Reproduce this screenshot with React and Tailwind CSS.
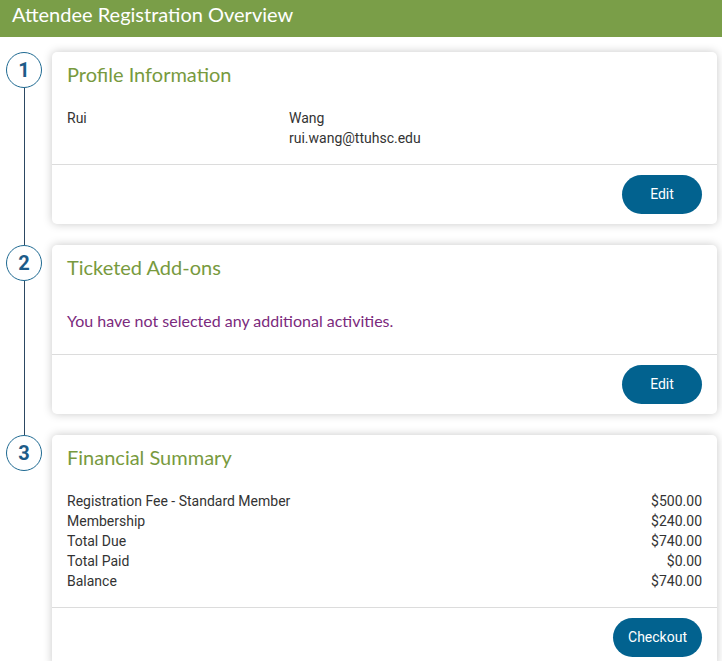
import React from 'react';

const LATO = "font-['Lato','Liberation_Sans',sans-serif]";
const ROBOTO = "font-['Roboto','Liberation_Sans',sans-serif]";

const FEES = [
  ['Registration Fee - Standard Member', '$500.00'],
  ['Membership', '$240.00'],
  ['Total Due', '$740.00'],
  ['Total Paid', '$0.00'],
  ['Balance', '$740.00'],
];

function Step({ n, last, children }) {
  return (
    <div className="flex">
      <div className="w-[48px] flex flex-col items-center shrink-0">
        <div className={`h-[36px] w-[36px] rounded-full border-[1.5px] border-[#1f6a92] bg-white flex items-center justify-center text-[20px] font-bold text-[#1d5b88] ${ROBOTO}`}>
          {n}
        </div>
        {!last && <div className="flex-1 w-px bg-[#2c4862]" />}
      </div>
      <div className={`flex-1 ml-[4px] mr-[5px] bg-white rounded-[5px] shadow-[0_0_10px_rgba(0,0,0,0.22)] ${last ? '' : 'mb-[21px]'}`}>
        {children}
      </div>
    </div>
  );
}

function Title({ children }) {
  return (
    <h2 className={`px-[15px] pt-[10px] text-[20px] leading-[24px] text-[#789a3e] ${LATO}`}>
      {children}
    </h2>
  );
}

function Footer({ label }) {
  return (
    <div className="border-t border-[#dcdcdc] flex justify-end px-[15px] pt-[10px] pb-[10px]">
      <button className={`h-[39px] min-w-[80px] px-[15px] rounded-full bg-[#02628f] text-white text-[14px] ${ROBOTO}`}>
        {label}
      </button>
    </div>
  );
}

export default function App() {
  return (
    <div className="min-h-screen bg-white">
      <div className="h-[37px] bg-[#7a9e48] px-[12px] pt-[2px]">
        <h1 className={`text-white text-[20px] leading-[24px] ${LATO}`}>Attendee Registration Overview</h1>
      </div>

      <div className="pt-[15px]">
        <Step n={1}>
          <Title>Profile Information</Title>
          <div className={`px-[15px] pt-[22px] pb-[16px] flex text-[14px] leading-[20px] text-[#333] ${ROBOTO}`}>
            <div className="w-[222px]">Rui</div>
            <div>
              <div>Wang</div>
              <div>rui.wang@ttuhsc.edu</div>
            </div>
          </div>
          <Footer label="Edit" />
        </Step>

        <Step n={2}>
          <Title>Ticketed Add-ons</Title>
          <p className={`px-[15px] pt-[32px] pb-[23px] text-[16px] leading-[20px] text-[#7b2a7d] ${LATO}`}>
            You have not selected any additional activities.
          </p>
          <Footer label="Edit" />
        </Step>

        <Step n={3} last>
          <Title>Financial Summary</Title>
          <div className={`px-[15px] pt-[22px] pb-[16px] text-[14px] leading-[20px] text-[#333] ${ROBOTO}`}>
            {FEES.map(([label, amount]) => (
              <div key={label} className="flex justify-between">
                <span>{label}</span>
                <span>{amount}</span>
              </div>
            ))}
          </div>
          <Footer label="Checkout" />
        </Step>
      </div>
    </div>
  );
}
